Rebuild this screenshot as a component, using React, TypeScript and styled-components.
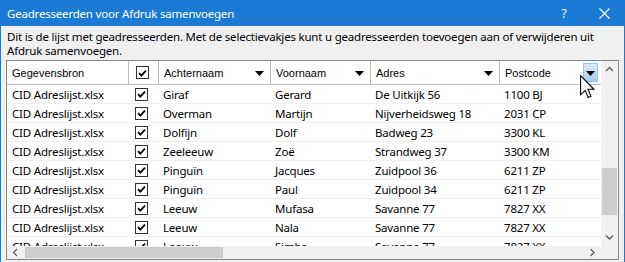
import { FC } from "react";
import styled, { createGlobalStyle } from "styled-components";

interface Recipient {
  source: string;
  checked: boolean;
  lastName: string;
  firstName: string;
  address: string;
  postcode: string;
}

const recipients: Recipient[] = [
  { source: "CID Adreslijst.xlsx", checked: true, lastName: "Giraf", firstName: "Gerard", address: "De Uitkijk 56", postcode: "1100 BJ" },
  { source: "CID Adreslijst.xlsx", checked: true, lastName: "Overman", firstName: "Martijn", address: "Nijverheidsweg 18", postcode: "2031 CP" },
  { source: "CID Adreslijst.xlsx", checked: true, lastName: "Dolfijn", firstName: "Dolf", address: "Badweg 23", postcode: "3300 KL" },
  { source: "CID Adreslijst.xlsx", checked: true, lastName: "Zeeleeuw", firstName: "Zoë", address: "Strandweg 37", postcode: "3300 KM" },
  { source: "CID Adreslijst.xlsx", checked: true, lastName: "Pinguïn", firstName: "Jacques", address: "Zuidpool 36", postcode: "6211 ZP" },
  { source: "CID Adreslijst.xlsx", checked: true, lastName: "Pinguïn", firstName: "Paul", address: "Zuidpool 34", postcode: "6211 ZP" },
  { source: "CID Adreslijst.xlsx", checked: true, lastName: "Leeuw", firstName: "Mufasa", address: "Savanne 77", postcode: "7827 XX" },
  { source: "CID Adreslijst.xlsx", checked: true, lastName: "Leeuw", firstName: "Nala", address: "Savanne 77", postcode: "7827 XX" },
  { source: "CID Adreslijst.xlsx", checked: true, lastName: "Leeuw", firstName: "Simba", address: "Savanne 77", postcode: "7827 XX" },
];

const COLUMNS = "122px 30px 112px 100px 129px 101px";

const GlobalStyle = createGlobalStyle`
  html, body {
    margin: 0;
    padding: 0;
    background: #f0f0f0;
  }
  body {
    font-family: "Noto Sans", "Open Sans", sans-serif;
    font-size: 11.5px;
    letter-spacing: -0.2px;
  }
`;

const Chevron: FC<{ dir: "up" | "down" | "left" | "right" }> = ({ dir }) => {
  const points = {
    up: "1,5 4.5,1.5 8,5",
    down: "1,1.5 4.5,5 8,1.5",
    left: "5,1 1.5,4.5 5,8",
    right: "1.5,1 5,4.5 1.5,8",
  }[dir];
  const horizontal = dir === "up" || dir === "down";
  return (
    <svg width={horizontal ? 9 : 7} height={horizontal ? 7 : 9}>
      <polyline points={points} fill="none" stroke="#606060" strokeWidth="1.3" />
    </svg>
  );
};

const CheckBox: FC<{ checked: boolean }> = ({ checked }) => (
  <Box>
    {checked && (
      <svg width="11" height="11" viewBox="0 0 11 11">
        <path d="M2 5.2 L4.3 7.6 L9 2.6" fill="none" stroke="#000" strokeWidth="1.8" />
      </svg>
    )}
  </Box>
);

const DropArrow = () => (
  <svg width="9" height="5" viewBox="0 0 9 5">
    <polygon points="0,0 9,0 4.5,5" fill="#000" />
  </svg>
);

const Cursor = () => (
  <CursorSvg width="15" height="24" viewBox="0 0 12.5 20">
    <path
      d="M0.5 0.5 V16.5 L4.3 12.8 L6.8 18.7 L9.1 17.7 L6.6 11.9 H11.6 Z"
      fill="#fff"
      stroke="#000"
      strokeWidth="0.9"
      strokeLinejoin="miter"
    />
  </CursorSvg>
);

export default function App() {
  return (
    <>
      <GlobalStyle />
      <Window>
        <TitleBar>
          <Title>Geadresseerden voor Afdruk samenvoegen</Title>
          <TitleButton>?</TitleButton>
          <TitleButton>
            <svg width="11" height="11" viewBox="0 0 11 11">
              <path d="M0.5 0.5 L10.5 10.5 M10.5 0.5 L0.5 10.5" stroke="#fff" strokeWidth="1.1" />
            </svg>
          </TitleButton>
        </TitleBar>
        <Body>
          <Description>
            Dit is de lijst met geadresseerden. Met de selectievakjes kunt u geadresseerden toevoegen aan of
            verwijderen uit Afdruk samenvoegen.
          </Description>
          <Grid>
            <Viewport>
              <HeaderRow>
                <HeaderCell>Gegevensbron</HeaderCell>
                <HeaderCell>
                  <CheckBox checked />
                </HeaderCell>
                <HeaderCell>
                  Achternaam
                  <DropArrow />
                </HeaderCell>
                <HeaderCell>
                  Voornaam
                  <DropArrow />
                </HeaderCell>
                <HeaderCell>
                  Adres
                  <DropArrow />
                </HeaderCell>
                <HeaderCell>
                  Postcode
                  <HoverButton>
                    <DropArrow />
                  </HoverButton>
                  <Cursor />
                </HeaderCell>
              </HeaderRow>
              {recipients.map((r, i) => (
                <Row key={i}>
                  <Cell>{r.source}</Cell>
                  <Cell>
                    <CheckBox checked={r.checked} />
                  </Cell>
                  <Cell>{r.lastName}</Cell>
                  <Cell>{r.firstName}</Cell>
                  <Cell>{r.address}</Cell>
                  <Cell>{r.postcode}</Cell>
                </Row>
              ))}
            </Viewport>
            <VScroll>
              <ArrowButton>
                <Chevron dir="up" />
              </ArrowButton>
              <VTrack>
                <VThumb style={{ marginTop: 90 }} />
              </VTrack>
              <ArrowButton>
                <Chevron dir="down" />
              </ArrowButton>
            </VScroll>
            <HScroll>
              <ArrowButton>
                <Chevron dir="left" />
              </ArrowButton>
              <HTrack>
                <HThumb style={{ width: 198 }} />
              </HTrack>
              <ArrowButton>
                <Chevron dir="right" />
              </ArrowButton>
            </HScroll>
            <Corner />
          </Grid>
        </Body>
      </Window>
    </>
  );
}

const Window = styled.div`
  width: 625px;
  height: 262px;
  box-sizing: border-box;
  border-left: 1px solid #1a7ad4;
  border-right: 1px solid #1a7ad4;
  background: #f0f0f0;
  display: flex;
  flex-direction: column;
  overflow: hidden;
`;
const TitleBar = styled.div`
  height: 26px;
  flex-shrink: 0;
  display: flex;
  align-items: center;
  background: #1a7ad4;
  color: #fff;
  padding-left: 6px;
`;
const Title = styled.div`
  flex: 1;
  font-size: 11.5px;
`;
const TitleButton = styled.div`
  width: 40px;
  height: 26px;
  display: flex;
  align-items: center;
  justify-content: center;
  font-size: 12px;
`;
const Body = styled.div`
  padding: 4px 5px 0;
  display: flex;
  flex-direction: column;
  gap: 2px;
`;
const Description = styled.div`
  padding-left: 1px;
  line-height: 14px;
  color: #000;
`;
const Grid = styled.div`
  border: 1px solid #828790;
  background: #fff;
  display: grid;
  grid-template-columns: 1fr 17px;
  grid-template-rows: 185px 13px;
`;
const Viewport = styled.div`
  overflow: hidden;
`;
const HeaderRow = styled.div`
  display: grid;
  grid-template-columns: ${COLUMNS};
  height: 24px;
  box-sizing: border-box;
  border-bottom: 1px solid #bcbcbc;
`;
const HeaderCell = styled.div`
  position: relative;
  display: flex;
  align-items: center;
  justify-content: space-between;
  padding: 0 6px 0 5px;
  border-right: 1px solid #bcbcbc;
  font-family: "Liberation Sans", Arial, sans-serif;
  font-size: 11px;
  letter-spacing: 0;
  color: #000;
  &:last-child {
    border-right: none;
  }
  svg {
    margin-top: 2px;
  }
`;
const HoverButton = styled.div`
  width: 15px;
  height: 19px;
  margin-right: -3px;
  display: flex;
  align-items: center;
  justify-content: center;
  background: linear-gradient(#d9ebfa, #a3cbef);
  border: 1px solid #9cc3e6;
  box-sizing: border-box;
`;
const CursorSvg = styled.svg`
  position: absolute;
  left: 80px;
  top: 14px;
  margin: 0 !important;
`;
const Row = styled.div`
  display: grid;
  grid-template-columns: ${COLUMNS};
  height: 19px;
  box-sizing: border-box;
  border-bottom: 1px solid #f0f0f0;
`;
const Cell = styled.div`
  display: flex;
  align-items: center;
  padding-left: 4px;
  color: #000;
  white-space: nowrap;
  overflow: hidden;
  &:first-child {
    padding-left: 5px;
  }
`;
const Box = styled.div`
  width: 13px;
  height: 13px;
  box-sizing: border-box;
  margin-left: 2px;
  border: 1px solid #333;
  background: #fff;
  display: flex;
  align-items: center;
  justify-content: center;
`;
const VScroll = styled.div`
  background: #f0f0f0;
  display: flex;
  flex-direction: column;
`;
const HScroll = styled.div`
  background: #f0f0f0;
  display: flex;
`;
const ArrowButton = styled.div`
  flex: 0 0 17px;
  height: 17px;
  display: flex;
  align-items: center;
  justify-content: center;
  ${HScroll} & {
    height: 13px;
  }
`;
const VTrack = styled.div`
  flex: 1;
  padding: 0 1px;
`;
const VThumb = styled.div`
  height: 47px;
  background: #cdcdcd;
`;
const HTrack = styled.div`
  flex: 1;
  padding: 1px 0;
`;
const HThumb = styled.div`
  height: 100%;
  margin-left: 1px;
  background: #cdcdcd;
`;
const Corner = styled.div`
  background: #f0f0f0;
`;
